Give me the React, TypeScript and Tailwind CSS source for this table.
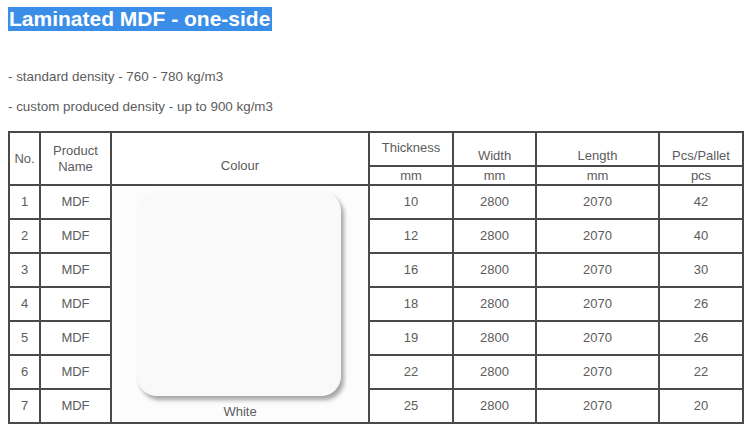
const rows = [
  { no: 1, thickness: 10, pcs: 42 },
  { no: 2, thickness: 12, pcs: 40 },
  { no: 3, thickness: 16, pcs: 30 },
  { no: 4, thickness: 18, pcs: 26 },
  { no: 5, thickness: 19, pcs: 26 },
  { no: 6, thickness: 22, pcs: 22 },
  { no: 7, thickness: 25, pcs: 20 },
];

const cell = "border-2 border-[#4a4a4a] text-center p-0";

export default function App() {
  return (
    <div className="h-[432px] w-[747px] bg-white font-['Liberation_Sans',Arial,sans-serif] text-[#5c5c5c]">
      <div className="px-2 pt-[7px]">
        <h1 className="inline-block bg-[#3a8ee8] pl-[1px] pr-[2px] text-[21px] font-bold leading-[24px] text-white">
          Laminated MDF - one-side
        </h1>
        <p className="mt-[36px] text-[13.4px] leading-[16px]">- standard density - 760 - 780 kg/m3</p>
        <p className="mt-[14px] text-[13.4px] leading-[16px]">- custom produced density - up to 900 kg/m3</p>
      </div>

      <table className="ml-2 mt-[16px] w-[734px] table-fixed border-collapse text-[13px] leading-[16px]">
        <colgroup>
          <col className="w-[31px]" />
          <col className="w-[71px]" />
          <col className="w-[258px]" />
          <col className="w-[84px]" />
          <col className="w-[83px]" />
          <col className="w-[123px]" />
          <col className="w-[84px]" />
        </colgroup>
        <thead>
          <tr className="h-[34px]">
            <th rowSpan={2} className={`${cell} align-middle font-normal`}>No.</th>
            <th rowSpan={2} className={`${cell} align-middle font-normal`}>
              Product
              <br />
              Name
            </th>
            <th rowSpan={2} className={`${cell} align-bottom pb-[10px] font-normal`}>Colour</th>
            <th className={`${cell} align-top pt-[7px] font-normal`}>Thickness</th>
            <th className={`${cell} align-bottom pb-[1px] font-normal`}>Width</th>
            <th className={`${cell} align-bottom pb-[1px] font-normal`}>Length</th>
            <th className={`${cell} align-bottom pb-[1px] font-normal`}>Pcs/Pallet</th>
          </tr>
          <tr className="h-[19px]">
            <th className={`${cell} align-middle font-normal`}>mm</th>
            <th className={`${cell} align-middle font-normal`}>mm</th>
            <th className={`${cell} align-middle font-normal`}>mm</th>
            <th className={`${cell} align-middle font-normal`}>pcs</th>
          </tr>
        </thead>
        <tbody>
          {rows.map((row, i) => (
            <tr key={row.no} className="h-[34px]">
              <td className={`${cell} align-middle`}>{row.no}</td>
              <td className={`${cell} align-middle`}>MDF</td>
              {i === 0 && (
                <td rowSpan={7} className={`${cell} align-top bg-[#fcfcfc]`}>
                  <div className="flex flex-col items-center pt-[5px]">
                    <div className="ml-[-2px] h-[205px] w-[204px] rounded-[20px] bg-[#f9f9f9] shadow-[3px_4px_4px_rgba(0,0,0,0.35)]" />
                    <span className="mt-[8px]">White</span>
                  </div>
                </td>
              )}
              <td className={`${cell} align-middle`}>{row.thickness}</td>
              <td className={`${cell} align-middle`}>2800</td>
              <td className={`${cell} align-middle`}>2070</td>
              <td className={`${cell} align-middle`}>{row.pcs}</td>
            </tr>
          ))}
        </tbody>
      </table>
    </div>
  );
}
